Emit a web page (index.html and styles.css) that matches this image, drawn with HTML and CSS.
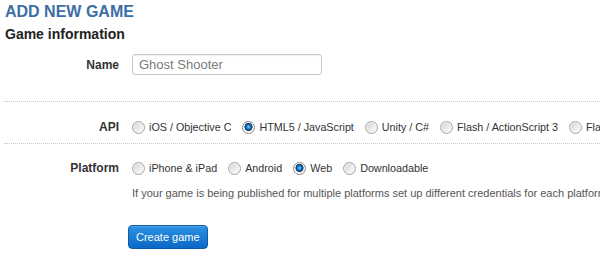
FILE: index.html
```html
<!DOCTYPE html>
<html lang="en">

<head>
    <meta charset="UTF-8">
    <meta name="viewport" content="width=device-width, initial-scale=1.0">
    <title>Add New Game</title>

    <!--Style-->

    <link rel="stylesheet" href="styles.css">
</head>

<body>
    <div class="page">
        <h1>ADD NEW GAME</h1>
        <h2>Game information</h2>

        <div class="field nameField">
            <label for="gameName">Name</label>
            <div>
                <input type="text" id="gameName" placeholder="Ghost Shooter">
            </div>
        </div>

        <div class="field optionField">
            <label>API</label>
            <div class="options">
                <label class="option"><input type="radio" name="api"> iOS / Objective C</label>
                <label class="option"><input type="radio" name="api" checked> HTML5 / JavaScript</label>
                <label class="option"><input type="radio" name="api"> Unity / C#</label>
                <label class="option"><input type="radio" name="api"> Flash / ActionScript 3</label>
                <label class="option"><input type="radio" name="api"> Flash / ActionScript 2</label>
            </div>
        </div>

        <div class="field optionField lastField">
            <label>Platform</label>
            <div>
                <div class="options">
                    <label class="option"><input type="radio" name="platform"> iPhone &amp; iPad</label>
                    <label class="option"><input type="radio" name="platform"> Android</label>
                    <label class="option"><input type="radio" name="platform" checked> Web</label>
                    <label class="option"><input type="radio" name="platform"> Downloadable</label>
                </div>
                <p class="helpText">If your game is being published for multiple platforms set up different credentials for each platform.</p>
            </div>
        </div>

        <div class="actions">
            <button id="createGame">Create game</button>
        </div>
    </div>
</body>

</html>
```

FILE: styles.css
```css
body {
    margin: 0;
    font-family: "Liberation Sans", Arial, sans-serif;
    color: #333;
    overflow: hidden;
}

.page {
    padding: 2px 0 0 4px;
    width: 700px;
}

h1 {
    margin: 0 0 3px 1px;
    font-size: 16px;
    line-height: 20px;
    color: #3b6ea5;
}

h2 {
    margin: 0 0 0 1px;
    font-size: 14px;
    line-height: 18px;
    color: #222;
}

.field {
    display: grid;
    grid-template-columns: 115px 1fr;
    column-gap: 13px;
    border-bottom: 1px dotted #c8c8c8;
}

.field > label {
    text-align: right;
    font-size: 12px;
    font-weight: bold;
    line-height: 14px;
    color: #333;
}

.nameField {
    margin-top: 11px;
    padding-bottom: 26px;
    align-items: center;
}

#gameName {
    box-sizing: border-box;
    width: 190px;
    height: 21px;
    margin: 0;
    padding: 0 6px;
    border: 1px solid #c6c6c6;
    border-radius: 3px;
    box-shadow: inset 0 1px 1px rgba(0, 0, 0, 0.06);
    font-family: "Liberation Sans", Arial, sans-serif;
    font-size: 13px;
    color: #777;
}

#gameName::placeholder {
    color: #7a7a7a;
}

.optionField {
    padding: 18px 0 9px;
}

.optionField > label {
    line-height: 13px;
    padding-top: 1px;
}

.options {
    display: flex;
    gap: 11px;
    white-space: nowrap;
}

.option {
    display: flex;
    align-items: center;
    gap: 4px;
    font-size: 10.75px;
    line-height: 14px;
    color: #333;
}

.option input {
    appearance: none;
    width: 13px;
    height: 13px;
    margin: 0;
    border: 1px solid #a4a4a4;
    border-radius: 50%;
    background: linear-gradient(135deg, #cfcfcf, #eeeeee 60%, #ffffff);
    box-shadow: inset 0 0 0 1px #f4f4f4;
}

.option input:checked {
    border-color: #8a8a8a;
    background: radial-gradient(circle at 50% 45%, #8fd4f6 0, #2b8fd6 1.5px, #0f4f8c 3px, #1a3b63 3.8px, #f0f0f0 4.3px, #ffffff 6px);
    box-shadow: none;
}

.lastField {
    border-bottom: none;
    padding-top: 17px;
}

.helpText {
    margin: 11px 0 0;
    font-size: 11px;
    line-height: 14px;
    color: #555;
    white-space: nowrap;
}

.actions {
    display: flex;
    padding: 16px 0 0 124px;
}

#createGame {
    height: 24px;
    padding: 0 7px;
    border: 1px solid #0b5aa6;
    border-radius: 4px;
    background: linear-gradient(#2b92e2, #0a68c6);
    color: #fff;
    font-family: "Liberation Sans", Arial, sans-serif;
    font-size: 11px;
    box-shadow: inset 0 1px 0 rgba(255, 255, 255, 0.2);
}
```
